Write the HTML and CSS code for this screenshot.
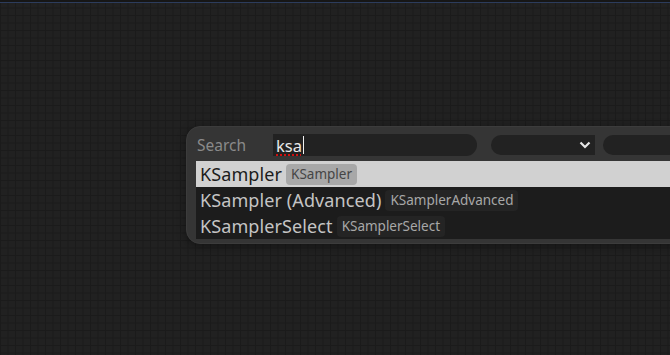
FILE: index.html
```html
<!DOCTYPE html>
<html lang="en">
<head>
    <meta charset="UTF-8">
    <meta name="viewport" content="width=device-width, initial-scale=1.0">
    <title>Search nodes</title>
    <link rel="stylesheet" href="styles.css">
</head>
<body>
    <div class="canvas">
        <div class="top-line"></div>

        <div class="search-box">
            <div class="search-header">
                <span class="search-label">Search</span>
                <div class="search-input">
                    <span class="typed">ksa</span><span class="caret"></span>
                </div>
                <div class="search-select">
                    <svg width="12" height="8" viewBox="0 0 12 8">
                        <path d="M1.5 1.5 L6 6 L10.5 1.5" fill="none" stroke="#e6e6e6" stroke-width="2.2"/>
                    </svg>
                </div>
                <div class="search-extra"></div>
            </div>

            <div class="results">
                <div class="result selected">
                    <span class="name">KSampler</span>
                    <span class="badge">KSampler</span>
                </div>
                <div class="result">
                    <span class="name">KSampler (Advanced)</span>
                    <span class="badge">KSamplerAdvanced</span>
                </div>
                <div class="result">
                    <span class="name">KSamplerSelect</span>
                    <span class="badge">KSamplerSelect</span>
                </div>
            </div>
        </div>
    </div>
</body>
</html>
```

FILE: styles.css
```css
html, body {
    margin: 0;
    padding: 0;
}
body {
    width: 670px;
    height: 355px;
    overflow: hidden;
    font-family: "Noto Sans", "Open Sans", sans-serif;
    background-color: #202020;
}
.canvas {
    position: relative;
    width: 670px;
    height: 355px;
    overflow: hidden;
    background-color: #212121;
    background-image:
        linear-gradient(to right, #1b1b1b 1px, transparent 1px),
        linear-gradient(to bottom, #1b1b1b 1px, transparent 1px);
    background-size: 7.5px 7.5px;
}
.top-line {
    height: 2px;
    background: #161616;
    border-bottom: 1px solid #2c3c5c;
}

/* search dialog, floats over the canvas */
.search-box {
    position: absolute;
    left: 186px;
    top: 126px;
    width: 540px;
    background: #353535;
    border: 1px solid #3c3c3c;
    border-radius: 14px;
    padding: 6px 0 4px 9px;
    box-shadow: 0 2px 10px rgba(0,0,0,0.4);
}
.search-header {
    display: flex;
    align-items: center;
    height: 24px;
}
.search-label {
    width: 76px;
    padding-left: 1px;
    font-size: 15.5px;
    color: #8a8a8a;
}
.search-input {
    display: flex;
    align-items: center;
    width: 204px;
    height: 22px;
    background: #222;
    border-radius: 0 11px 11px 0;
    padding-left: 3px;
    box-sizing: border-box;
    font-size: 16.5px;
    color: #e8e8e8;
}
.typed {
    text-decoration: underline dotted #d01010;
    text-decoration-thickness: 2px;
    text-underline-offset: 3px;
}
.caret {
    display: inline-block;
    width: 1px;
    height: 18px;
    margin-left: 1px;
    background: #f0f0f0;
}
.search-select {
    display: flex;
    align-items: center;
    justify-content: flex-end;
    width: 104px;
    height: 20px;
    margin-left: 14px;
    padding-right: 4px;
    box-sizing: border-box;
    background: #222;
    border-radius: 10px 0 0 10px;
}
.search-extra {
    width: 120px;
    height: 20px;
    margin-left: 8px;
    background: #222;
    border-radius: 10px 0 0 10px;
}

.results {
    margin-top: 4px;
    background: #1c1c1c;
}
.result {
    display: flex;
    align-items: center;
    gap: 4px;
    height: 26px;
    padding-left: 4px;
    color: #c4c4c4;
}
.result .name {
    font-size: 18px;
    letter-spacing: 0.1px;
}
.result .badge {
    font-size: 13.5px;
    color: #a8a8a8;
    background: #242424;
    border-radius: 4px;
    padding: 1px 5px 2px;
    line-height: 18px;
}
.result.selected {
    background: #d1d1d1;
    color: #1c1c1c;
}
.result.selected .badge {
    background: #a8a8a8;
    color: #454545;
}
```
